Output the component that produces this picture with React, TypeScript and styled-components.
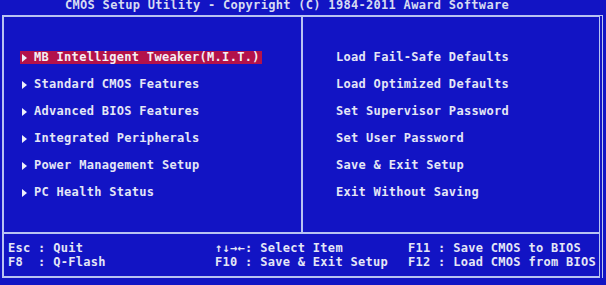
import React from 'react';
import styled, { createGlobalStyle } from 'styled-components';

const GlobalStyle = createGlobalStyle`
  html, body {
    margin: 0;
    padding: 0;
    background: #1214c4;
    overflow: hidden;
  }
`;

const Screen = styled.div`
  width: 606px;
  height: 285px;
  background: #1214c4;
  color: #e4e6f6;
  font-family: 'DejaVu Sans Mono', 'Liberation Mono', monospace;
  font-weight: bold;
  font-size: 12px;
  letter-spacing: 0.3px;
  overflow: hidden;
`;

const Title = styled.div`
  height: 15px;
  line-height: 11px;
  padding-left: 65px;
  color: #d6dbf2;
  white-space: pre;
`;

const Frame = styled.div`
  margin-left: 2px;
  width: 595px;
  border-top: 2px solid #b8c3f2;
  border-left: 2px solid #b8c3f2;
  border-right: 4px double #b8c3f2;
`;

const Body = styled.div`
  display: grid;
  grid-template-columns: 299px 1fr;
  height: 215px;
  border-bottom: 2px solid #b8c3f2;
`;

const Panel = styled.div<{ $inset: number; $divider?: boolean }>`
  display: flex;
  flex-direction: column;
  padding-top: 27px;
  padding-left: ${(p) => p.$inset}px;
  border-right: ${(p) => (p.$divider ? '2px solid #b8c3f2' : 'none')};
`;

const Row = styled.div`
  height: 27px;
  display: flex;
  align-items: center;
`;

const Item = styled.span<{ $active?: boolean }>`
  display: inline-flex;
  align-items: center;
  height: 13px;
  line-height: 13px;
  white-space: pre;
  background: ${(p) => (p.$active ? '#b3124a' : 'transparent')};
  color: ${(p) => (p.$active ? '#f4eef4' : '#e4e6f6')};
  padding-right: ${(p) => (p.$active ? '2px' : '0')};
`;

const Arrow = styled.span`
  display: inline-block;
  width: 0;
  height: 0;
  margin: 0 7px 0 2px;
  border-top: 4px solid transparent;
  border-bottom: 4px solid transparent;
  border-left: 5px solid #eef0fa;
`;

const Footer = styled.div`
  display: grid;
  grid-template-columns: 207px 193px 1fr;
  padding: 7px 0 7px 4px;
  border-bottom: 2px solid #b8c3f2;
`;

const Keys = styled.div`
  display: flex;
  flex-direction: column;
`;

const KeyLine = styled.div`
  height: 14px;
  line-height: 14px;
  white-space: pre;
`;

const leftItems = [
  'MB Intelligent Tweaker(M.I.T.)',
  'Standard CMOS Features',
  'Advanced BIOS Features',
  'Integrated Peripherals',
  'Power Management Setup',
  'PC Health Status',
];

const rightItems = [
  'Load Fail-Safe Defaults',
  'Load Optimized Defaults',
  'Set Supervisor Password',
  'Set User Password',
  'Save & Exit Setup',
  'Exit Without Saving',
];

const footer = [
  ['Esc : Quit', 'F8  : Q-Flash'],
  ['\u2191\u2193\u2192\u2190: Select Item', 'F10 : Save & Exit Setup'],
  ['F11 : Save CMOS to BIOS', 'F12 : Load CMOS from BIOS'],
];

export default function App() {
  return (
    <Screen>
      <GlobalStyle />
      <Title>CMOS Setup Utility - Copyright (C) 1984-2011 Award Software</Title>
      <Frame>
        <Body>
          <Panel $inset={16} $divider>
            {leftItems.map((label, i) => (
              <Row key={label}>
                <Item $active={i === 0}>
                  <Arrow />
                  {label}
                </Item>
              </Row>
            ))}
          </Panel>
          <Panel $inset={33}>
            {rightItems.map((label) => (
              <Row key={label}>
                <Item>{label}</Item>
              </Row>
            ))}
          </Panel>
        </Body>
        <Footer>
          {footer.map((col) => (
            <Keys key={col[0]}>
              {col.map((line) => (
                <KeyLine key={line}>{line}</KeyLine>
              ))}
            </Keys>
          ))}
        </Footer>
      </Frame>
    </Screen>
  );
}
